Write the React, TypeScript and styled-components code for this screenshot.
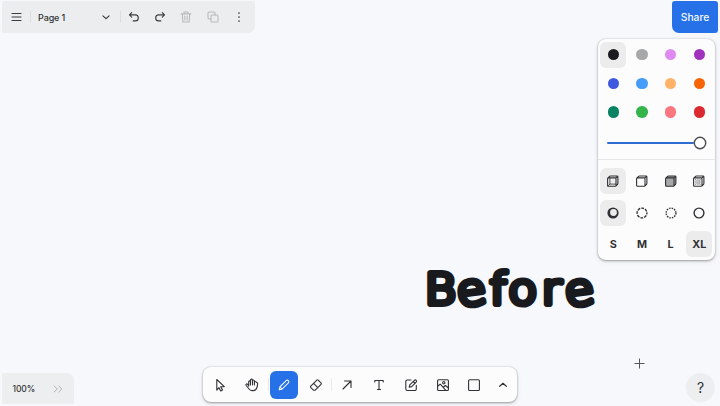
import React from "react";
import styled, { createGlobalStyle } from "styled-components";

const GlobalStyle = createGlobalStyle`
  * { box-sizing: border-box; }
  body { margin: 0; overflow: hidden; background: #f7f8fc; color: #303134; font-family: Inter, sans-serif; }
  button { font: inherit; color: inherit; border: 0; padding: 0; background: none; }
  svg { display: block; flex: none; }
`;

const Editor = styled.main`
  position: relative;
  display: flex;
  flex-direction: column;
  justify-content: space-between;
  width: 720px;
  height: 406px;
  overflow: hidden;
`;

const TopRow = styled.header`
  display: flex;
  justify-content: space-between;
  align-items: flex-start;
  padding: 1px 2px 0;
`;

const PageBar = styled.nav`
  display: flex;
  align-items: center;
  width: 253px;
  height: 32px;
  background: #ecedef;
  border-radius: 2px 2px 7px 2px;
`;

const BarButton = styled.button<{ $width: number; $faded?: boolean }>`
  && {
    display: flex;
    align-items: center;
    justify-content: center;
    width: ${(p) => p.$width}px;
    height: 32px;
    color: ${(p) => (p.$faded ? "#b9babd" : "#3b3c40")};
  }
`;

const PageMenu = styled.button`
  && {
    display: flex;
    align-items: center;
    justify-content: space-between;
    width: 89px;
    height: 32px;
    padding: 0 7px 0 7px;
    font-size: 9px;
    font-weight: 500;
    letter-spacing: -0.1px;
  }
`;

const Separator = styled.span<{ $height: number }>`
  width: 1px;
  height: ${(p) => p.$height}px;
  background: #dcdde0;
`;

const SideColumn = styled.div`
  display: flex;
  flex-direction: column;
  align-items: flex-end;
`;

const ShareButton = styled.button`
  && {
    width: 46px;
    height: 32px;
    border-radius: 3px 3px 3px 7px;
    background: #2671e8;
    color: #f4f8ff;
    font-size: 10.3px;
    font-weight: 500;
  }
`;

const StylePanel = styled.aside`
  width: 117px;
  height: 221px;
  margin: 6px 3px 0 0;
  padding: 1.3px 1px 0 1px;
  border-radius: 8px;
  background: #fcfcfc;
  box-shadow: 0 1px 2px #77787c99, 0 0 2px #8d8e9470, 0 2px 5px #a0a1a633;
`;

const OptionGrid = styled.div<{ $row: number }>`
  display: grid;
  grid-template-columns: repeat(4, 28.67px);
  grid-auto-rows: ${(p) => p.$row}px;
  place-items: center;
`;

const Option = styled.button<{ $selected?: boolean }>`
  && {
    display: flex;
    align-items: center;
    justify-content: center;
    width: 26px;
    height: 26px;
    border-radius: 6px;
    background: ${(p) => (p.$selected ? "#ececed" : "transparent")};
    font-size: 10.8px;
    font-weight: 700;
    color: #303134;
  }
`;

const Swatch = styled.span<{ $color: string }>`
  width: 11.5px;
  height: 11.5px;
  border-radius: 50%;
  background: ${(p) => p.$color};
`;

const Slider = styled.div`
  display: flex;
  align-items: center;
  height: 34px;
  padding-left: 8.5px;
  border-bottom: 1px solid #e6e7e9;
  margin: 0 -1px 5.2px -1px;
`;

const SliderTrack = styled.span`
  width: 87.5px;
  height: 2px;
  border-radius: 1px;
  background: #2f6dd3;
`;

const SliderThumb = styled.svg`
  margin-left: -1px;
`;

const BottomRow = styled.footer`
  display: flex;
  align-items: flex-end;
  justify-content: space-between;
  padding: 0 5px 2px 2px;
`;

const ZoomBar = styled.div`
  display: flex;
  align-items: center;
  justify-content: space-between;
  width: 72px;
  height: 31px;
  padding: 0 10px 0 10.5px;
  border-radius: 2px 7px 2px 2px;
  background: #edeef0;
  font-size: 8.5px;
  font-weight: 500;
  letter-spacing: -0.1px;
  color: #333437;
`;

const ToolBar = styled.div`
  display: flex;
  align-items: center;
  width: 314px;
  height: 35px;
  margin: 0 0 2px -40px;
  padding-left: 1.4px;
  border-radius: 8px;
  background: #fcfcfc;
  box-shadow: 0 1px 2px #77787c99, 0 0 2px #8d8e9470, 0 2px 5px #a0a1a633;
`;

const ToolButton = styled.button<{ $narrow?: boolean }>`
  && {
    display: flex;
    flex: none;
    align-items: center;
    justify-content: center;
    width: ${(p) => (p.$narrow ? 25 : 31.75)}px;
    height: 35px;
  }
`;

const ActiveTool = styled.span`
  display: flex;
  align-items: center;
  justify-content: center;
  width: 28px;
  height: 28px;
  border-radius: 6px;
  background: #2671e8;
  color: #edf4ff;
`;

const ToolDivider = styled.span`
  width: 1px;
  height: 13px;
  margin-right: -1px;
  background: #e8e9ec;
`;

const HelpButton = styled.button`
  && {
    width: 29px;
    height: 29px;
    margin-bottom: 2px;
    border-radius: 50%;
    background: #edeef0;
    font-size: 14px;
    font-weight: 400;
  }
`;

const CanvasLabel = styled.svg`
  position: absolute;
  left: 418px;
  top: 256px;
  font-family: "DejaVu Sans", sans-serif;
  font-size: 43px;
  font-weight: 200;
`;

const Pointer = styled.svg`
  position: absolute;
  left: 634px;
  top: 358px;
`;

type IconProps = { children: React.ReactNode; size?: number; weight?: number };

function Icon({ children, size = 16, weight = 1.1 }: IconProps) {
  return (
    <svg width={size} height={size} viewBox="0 0 16 16" fill="none" stroke="currentColor"
      strokeWidth={weight} strokeLinecap="round" strokeLinejoin="round" aria-hidden="true">
      {children}
    </svg>
  );
}

const colors = [
  "#1b1c1f", "#a6a8aa", "#df8af0", "#9f31bd",
  "#3f5ae0", "#459df7", "#ffb266", "#f56506",
  "#078363", "#37b34b", "#fa7780", "#dc2930",
];

const cube = "M3.4 4.9h6.8q.8 0 .8.8v6.8q0 .8-.8.8H3.4q-.8 0-.8-.8V5.7q0-.8.8-.8ZM2.9 5.1 4.5 3.4Q4.9 3 5.5 3H12q.9 0 .9.8v6.5q0 .6-.4 1L10.8 13M10.8 5.1l1.8-1.8";

const fills = [
  <Icon><path d={cube} /><path strokeWidth=".8" d="M4.9 5v6.1h6M2.9 13l2-1.9" /></Icon>,
  <Icon><path d={cube} /></Icon>,
  <Icon><path d={cube} fill="#a7a8a9" /></Icon>,
  <Icon>
    <path d={cube} />
    <path strokeWidth=".9" d="M4.7 6.8h.1M7 6.8h.1M9 6.8h.1M4.7 9h.1M7 9h.1M9 9h.1M4.7 11.2h.1M7 11.2h.1M9 11.2h.1M5.9 7.9h.1M8.1 7.9h.1M5.9 10.1h.1M8.1 10.1h.1" />
  </Icon>,
];

const dashes = [
  <Icon><path fill="currentColor" stroke="none" fillRule="evenodd" d="M8 2.4a5.6 5.6 0 1 0 0 11.2A5.6 5.6 0 0 0 8 2.4ZM8.5 4.1a3.4 3.4 0 1 1 0 6.8 3.4 3.4 0 0 1 0-6.8Z" /></Icon>,
  <Icon><circle cx="8" cy="8" r="4.9" strokeWidth="1.4" strokeLinecap="butt" strokeDasharray="2.8 1.05" strokeDashoffset="1.4" /></Icon>,
  <Icon><circle cx="8" cy="8" r="4.9" strokeWidth="1.4" strokeLinecap="butt" strokeDasharray="1.5 1.07" /></Icon>,
  <Icon><circle cx="8" cy="8" r="4.9" strokeWidth="1.4" /></Icon>,
];

export default function App() {
  return (
    <>
      <GlobalStyle />
      <Editor>
        <TopRow>
          <PageBar>
            <BarButton $width={28} aria-label="Menu"><Icon><path d="M4 4.5h9M4 8h9M4 11.5h9" /></Icon></BarButton>
            <Separator $height={12} />
            <PageMenu>Page 1<Icon size={14} weight={1.25}><path d="m4.5 6.7 3.5 3.2 3.5-3.2" /></Icon></PageMenu>
            <Separator $height={12} />
            <BarButton $width={25} aria-label="Undo"><Icon><path d="M5.7 3.7 3.5 5.9l2.2 2.2M3.6 5.9h5.7a3 3 0 0 1 0 6H7.2" /></Icon></BarButton>
            <BarButton $width={27} aria-label="Redo"><Icon><path d="m10.3 3.7 2.2 2.2-2.2 2.2M12.4 5.9H6.7a3 3 0 0 0 0 6h2.1" /></Icon></BarButton>
            <BarButton $width={26} $faded aria-label="Delete"><Icon><path d="M3.2 4.9h9.6M6 4.7V3h4v1.7M4.3 5l.5 8h6.4l.5-8M6.8 7v4M9.2 7v4" /></Icon></BarButton>
            <BarButton $width={27} $faded aria-label="Duplicate"><Icon><rect x="6" y="6" width="7" height="7" rx="1" /><path d="M6 10H4.3A1.3 1.3 0 0 1 3 8.7V4.3A1.3 1.3 0 0 1 4.3 3h4.4A1.3 1.3 0 0 1 10 4.3V6" /></Icon></BarButton>
            <BarButton $width={26} aria-label="More"><Icon weight={1.7}><path d="M8 4v.01M8 8v.01M8 12v.01" /></Icon></BarButton>
          </PageBar>
          <SideColumn>
            <ShareButton>Share</ShareButton>
            <StylePanel>
              <OptionGrid $row={28.67}>
                {colors.map((color, i) => (
                  <Option key={color} $selected={i === 0} aria-label={color}><Swatch $color={color} /></Option>
                ))}
              </OptionGrid>
              <Slider>
                <SliderTrack />
                <SliderThumb width="14" height="14"><circle cx="7" cy="7" r="5.7" fill="#fff" stroke="#494b50" strokeWidth="1.4" /></SliderThumb>
              </Slider>
              <OptionGrid $row={31.5}>
                {fills.map((icon, i) => <Option key={i} $selected={i === 0}>{icon}</Option>)}
                {dashes.map((icon, i) => <Option key={i} $selected={i === 0}>{icon}</Option>)}
                {["S", "M", "L", "XL"].map((size) => <Option key={size} $selected={size === "XL"}>{size}</Option>)}
              </OptionGrid>
            </StylePanel>
          </SideColumn>
        </TopRow>
        <CanvasLabel width="184" height="66" fill="#181a1e" stroke="#181a1e" strokeWidth="6.2" strokeLinejoin="round" strokeLinecap="round">
          <text transform="scale(1.1 1)" x="6.2 37.3 65.3 82 112.5 135.5" y="48.5 50.5 48.5 48.5 48.5 50.5" rotate="0 -8 0 0 0 -8">Before</text>
        </CanvasLabel>
        <Pointer width="11" height="11" stroke="#54565a" strokeWidth="1"><path d="M5.5 .5v10M.5 5.5h10" /></Pointer>
        <BottomRow>
          <ZoomBar>100%<Icon size={12} weight={1.2}><path d="m3 4 4 4-4 4m6-8 4 4-4 4" stroke="#a9abad" /></Icon></ZoomBar>
          <ToolBar>
            <ToolButton aria-label="Select"><Icon><path d="m4.8 2.5 7.5 7.1-3.7.2 1.9 3.1-1.8 1-1.7-3.2-2.2 2.5Z" /></Icon></ToolButton>
            <ToolButton aria-label="Hand"><Icon><path d="M4.7 9.1V4.9c0-1.4 1.8-1.4 1.8 0V8M6.5 5V3.2c0-1.4 2-1.4 2 0v4.5M8.5 4c0-1.4 1.9-1.4 1.9 0v4M10.4 5.5c0-1.4 2-1.4 2 0 1 0 1.4.3 1.2 1.4-.2 3.7-1 6.7-4.4 6.7H8c-1.4 0-2.2-.6-3-1.6L2.2 8.5c-.9-1.2.6-2.1 1.5-1.1l1 1.3" /></Icon></ToolButton>
            <ToolDivider />
            <ToolButton aria-label="Draw"><ActiveTool><Icon><path d="m3.2 12.8.6-2.8 6.4-6.4c1.4-1.4 3.6.8 2.2 2.2L6 12.2ZM3.8 10 6 12.2" /></Icon></ActiveTool></ToolButton>
            <ToolButton aria-label="Eraser"><Icon><path d="m2.8 9.2 6-6.1q.7-.7 1.4 0l2.8 2.8q.7.7 0 1.4l-6 6H5.7L2.8 10.6q-.7-.7 0-1.4ZM5.6 6.4l4.2 4.2" /></Icon></ToolButton>
            <ToolDivider />
            <ToolButton aria-label="Arrow"><Icon><path d="m4 12 8-8M5.6 4H12v6.4" /></Icon></ToolButton>
            <ToolButton aria-label="Text"><Icon><path d="M3.8 5V3.5h8.4V5M8 3.5v9M6.4 12.5h3.2" /></Icon></ToolButton>
            <ToolButton aria-label="Note"><Icon><path d="M8 3H4.2A1.4 1.4 0 0 0 2.8 4.4v7.7a1.4 1.4 0 0 0 1.4 1.4h7.7a1.4 1.4 0 0 0 1.4-1.4V8.4M6.8 7.9l4.6-4.6c1.2-1.2 3 .6 1.8 1.8L8.7 9.6l-2.5.6ZM10.2 4.5 12 6.3" /></Icon></ToolButton>
            <ToolButton aria-label="Image"><Icon><rect x="2.6" y="2.7" width="10.8" height="10.8" rx="1" /><circle cx="8.8" cy="5.7" r="1.2" /><path d="m2.8 9 2.5-1.8 5.3 6M8.2 10.3l2.2-1.8 2.8 2.2" /></Icon></ToolButton>
            <ToolButton aria-label="Rectangle"><Icon><rect x="2.6" y="2.7" width="10.8" height="10.8" rx="1" /></Icon></ToolButton>
            <ToolButton $narrow aria-label="More tools"><Icon weight={1.2}><path d="M4.7 9.3 8 6.3l3.3 3" /></Icon></ToolButton>
          </ToolBar>
          <HelpButton>?</HelpButton>
        </BottomRow>
      </Editor>
    </>
  );
}
